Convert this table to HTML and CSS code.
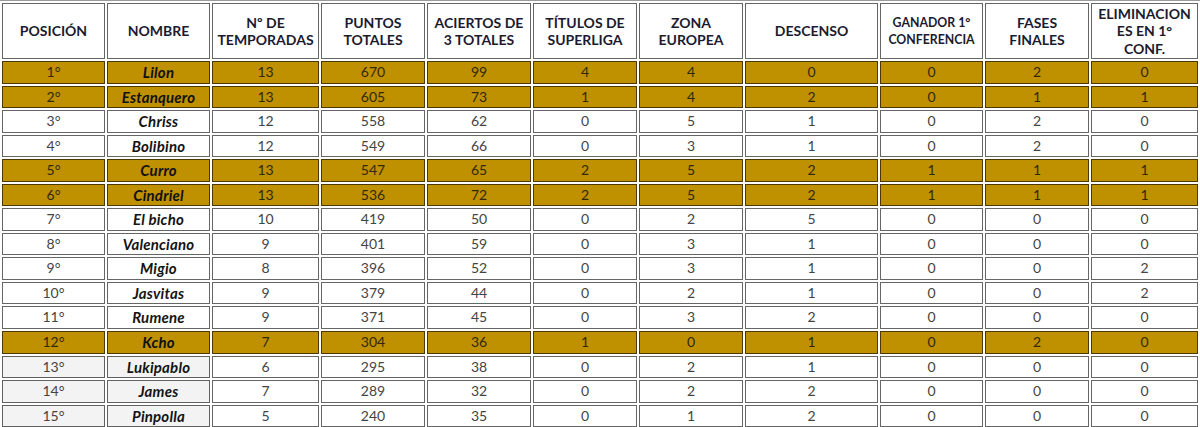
FILE: index.html
```html
<!DOCTYPE html>
<html lang="es">
<head>
<meta charset="utf-8">
<title>Clasificación</title>
<link rel="stylesheet" href="styles.css">
</head>
<body>
<table class="ranking">
  <colgroup>
    <col class="c103"><col class="c103"><col class="c107"><col class="c104"><col class="c104"><col class="c104"><col class="c104"><col class="c133"><col class="c103"><col class="c104"><col class="c107">
  </colgroup>
  <thead>
    <tr>
      <th>POSICIÓN</th>
      <th>NOMBRE</th>
      <th>Nº DE TEMPORADAS</th>
      <th>PUNTOS TOTALES</th>
      <th>ACIERTOS DE 3 TOTALES</th>
      <th>TÍTULOS DE SUPERLIGA</th>
      <th>ZONA EUROPEA</th>
      <th>DESCENSO</th>
      <th class="small">GANADOR 1° CONFERENCIA</th>
      <th>FASES FINALES</th>
      <th>ELIMINACION<wbr>ES EN 1° CONF.</th>
    </tr>
  </thead>
  <tbody>
    <tr class="gold"><td>1°</td><td class="name">Lilon</td><td>13</td><td>670</td><td>99</td><td>4</td><td>4</td><td>0</td><td>0</td><td>2</td><td>0</td></tr>
    <tr class="gold"><td>2°</td><td class="name">Estanquero</td><td>13</td><td>605</td><td>73</td><td>1</td><td>4</td><td>2</td><td>0</td><td>1</td><td>1</td></tr>
    <tr><td>3°</td><td class="name">Chriss</td><td>12</td><td>558</td><td>62</td><td>0</td><td>5</td><td>1</td><td>0</td><td>2</td><td>0</td></tr>
    <tr><td>4°</td><td class="name">Bolibino</td><td>12</td><td>549</td><td>66</td><td>0</td><td>3</td><td>1</td><td>0</td><td>2</td><td>0</td></tr>
    <tr class="gold"><td>5°</td><td class="name">Curro</td><td>13</td><td>547</td><td>65</td><td>2</td><td>5</td><td>2</td><td>1</td><td>1</td><td>1</td></tr>
    <tr class="gold"><td>6°</td><td class="name">Cindriel</td><td>13</td><td>536</td><td>72</td><td>2</td><td>5</td><td>2</td><td>1</td><td>1</td><td>1</td></tr>
    <tr><td>7°</td><td class="name">El bicho</td><td>10</td><td>419</td><td>50</td><td>0</td><td>2</td><td>5</td><td>0</td><td>0</td><td>0</td></tr>
    <tr><td>8°</td><td class="name">Valenciano</td><td>9</td><td>401</td><td>59</td><td>0</td><td>3</td><td>1</td><td>0</td><td>0</td><td>0</td></tr>
    <tr><td>9°</td><td class="name">Migio</td><td>8</td><td>396</td><td>52</td><td>0</td><td>3</td><td>1</td><td>0</td><td>0</td><td>2</td></tr>
    <tr><td>10°</td><td class="name">Jasvitas</td><td>9</td><td>379</td><td>44</td><td>0</td><td>2</td><td>1</td><td>0</td><td>0</td><td>2</td></tr>
    <tr><td>11°</td><td class="name">Rumene</td><td>9</td><td>371</td><td>45</td><td>0</td><td>3</td><td>2</td><td>0</td><td>0</td><td>0</td></tr>
    <tr class="gold"><td>12°</td><td class="name">Kcho</td><td>7</td><td>304</td><td>36</td><td>1</td><td>0</td><td>1</td><td>0</td><td>2</td><td>0</td></tr>
    <tr class="low"><td>13°</td><td class="name">Lukipablo</td><td>6</td><td>295</td><td>38</td><td>0</td><td>2</td><td>1</td><td>0</td><td>0</td><td>0</td></tr>
    <tr class="low"><td>14°</td><td class="name">James</td><td>7</td><td>289</td><td>32</td><td>0</td><td>2</td><td>2</td><td>0</td><td>0</td><td>0</td></tr>
    <tr class="low"><td>15°</td><td class="name">Pinpolla</td><td>5</td><td>240</td><td>35</td><td>0</td><td>1</td><td>2</td><td>0</td><td>0</td><td>0</td></tr>
  </tbody>
</table>
</body>
</html>
```
FILE: styles.css
```css
html, body {
  margin: 0;
  padding: 0;
  background: #ffffff;
}

.ranking {
  width: 1200px;
  table-layout: fixed;
  border-collapse: separate;
  border-spacing: 2px;
  border-top: 1px solid #9a9a9a;
  font-family: Lato, "Liberation Sans", sans-serif;
  font-size: 14px;
  color: #444444;
}

.c103 { width: 103px; }
.c104 { width: 104px; }
.c107 { width: 107px; }
.c133 { width: 133px; }

.ranking th,
.ranking td {
  border: 1px solid rgba(0, 0, 0, 0.6);
  text-align: center;
  vertical-align: middle;
}

.ranking th {
  padding: 1px 4px;
  height: 52px;
  line-height: 17.33px;
  font-weight: 700;
  font-size: 14px;
  color: #1b1b2f;
  background: #ffffff;
}

.ranking th.small {
  font-size: 12.3px;
}

.ranking td {
  padding: 0 1px;
  height: 20.55px;
  line-height: 20.55px;
  white-space: nowrap;
}

.ranking td.name {
  font-weight: 700;
  font-style: italic;
  font-size: 15px;
  letter-spacing: 0.2px;
  color: #141414;
}

.ranking tr.gold {
  background: #bf9000;
}

.ranking tr.gold td {
  color: #33290a;
}

.ranking tr.gold td.name {
  color: #111111;
}

.ranking tr.low td:nth-child(-n+2) {
  background: #f3f3f3;
}
```
